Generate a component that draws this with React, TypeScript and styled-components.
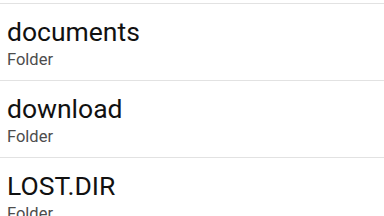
import styled, { createGlobalStyle } from "styled-components";

const Global = createGlobalStyle`
    html, body {
        margin: 0;
        padding: 0;
        background: #ffffff;
        font-family: Roboto, "Noto Sans", sans-serif;
        overflow: hidden;
    }
`;

const List = styled.div`
    width: 384px;
    height: 216px;
    overflow: hidden;
    display: flex;
    flex-direction: column;
    background: #ffffff;
`;

const Tail = styled.div`
    height: 3px;
    flex-shrink: 0;
    border-bottom: 1px solid #e2e2e2;
`;

const Row = styled.div`
    height: 76px;
    flex-shrink: 0;
    box-sizing: content-box;
    padding-left: 7px;
    display: flex;
    flex-direction: column;
    border-bottom: 1px solid #e2e2e2;
`;

const Title = styled.div`
    margin-top: 13px;
    font-size: 26.5px;
    line-height: 30px;
    color: #111111;
`;

const Sub = styled.div`
    margin-top: 3px;
    font-size: 16.5px;
    line-height: 20px;
    color: #4d4d4d;
`;

const items = ["documents", "download", "LOST.DIR"];

export default function App() {
    return (
        <>
            <Global />
            <List>
                <Tail />
                {items.map((name) => (
                    <Row key={name}>
                        <Title>{name}</Title>
                        <Sub>Folder</Sub>
                    </Row>
                ))}
            </List>
        </>
    );
}
